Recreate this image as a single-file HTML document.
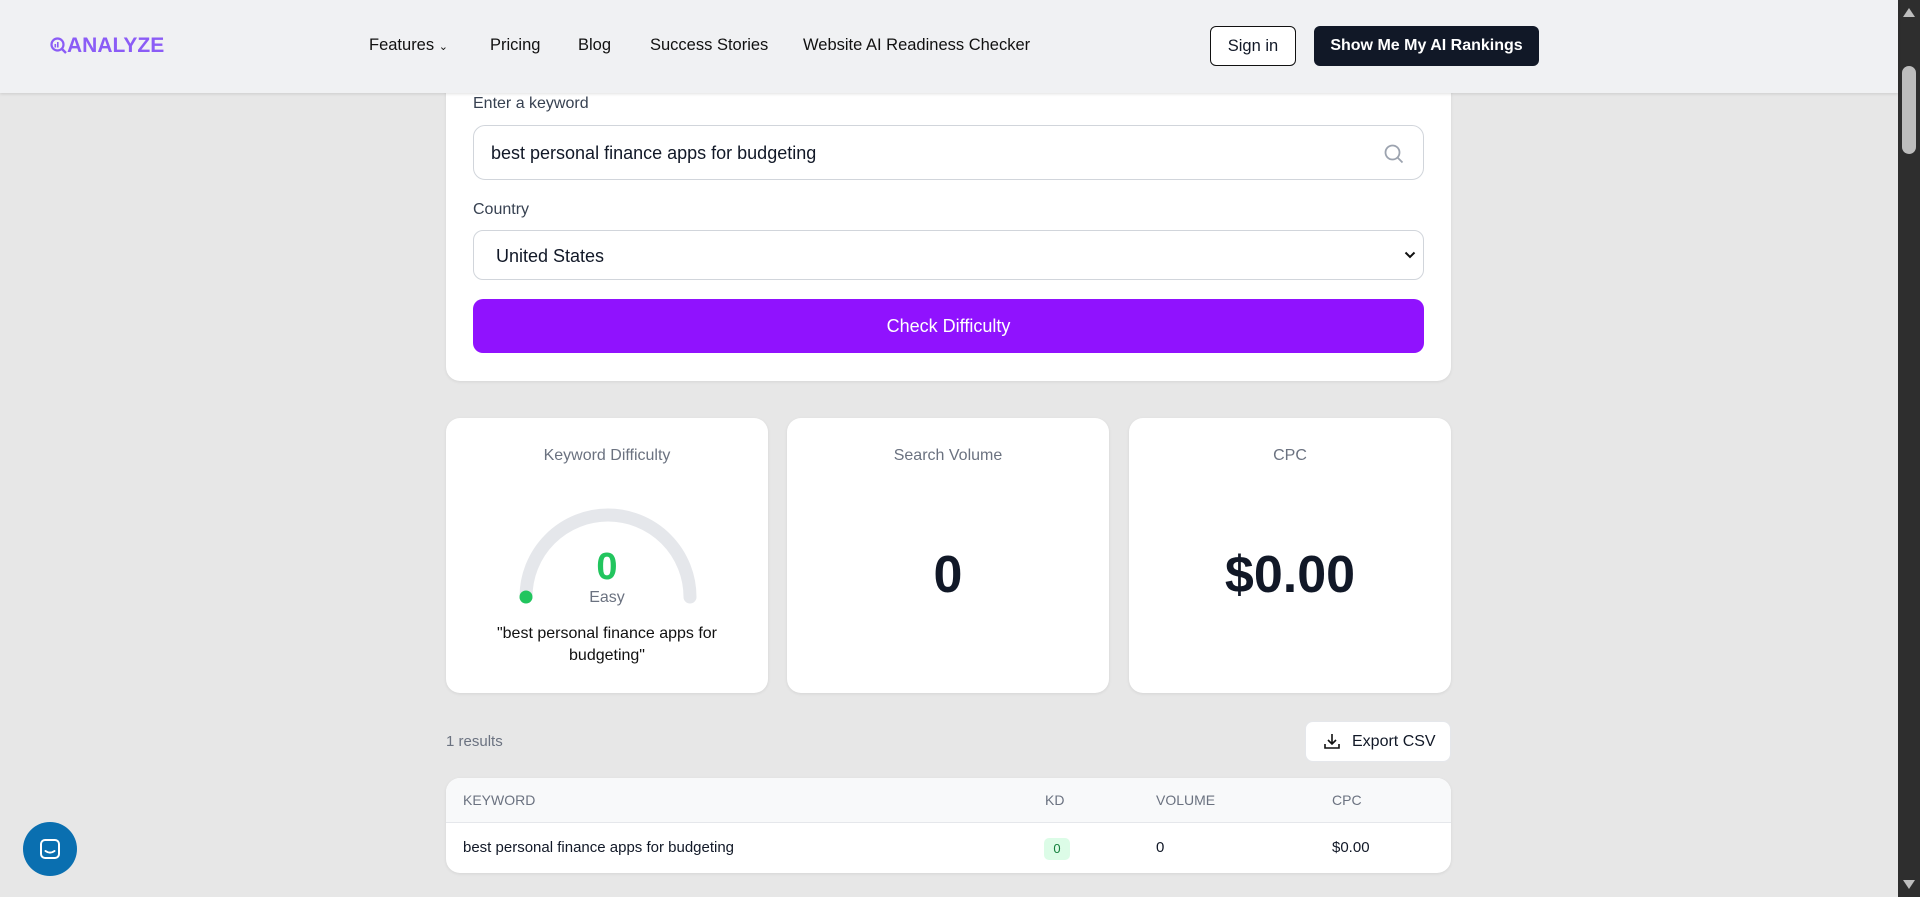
<!DOCTYPE html>
<html><head><meta charset="utf-8"><style>
*{box-sizing:border-box;margin:0;padding:0}
body{width:1920px;height:897px;overflow:hidden;background:#e7e7e7;font-family:"Liberation Sans",sans-serif;color:#111827;position:relative}
.abs{position:absolute}
.nav{left:0;top:0;width:1898px;height:93px;background:#f0f1f3;box-shadow:0 1px 3px rgba(0,0,0,.12);z-index:5}
.nav a{position:absolute;top:36px;font-size:16.5px;color:#111;}
.card{background:#fff;border-radius:14px;box-shadow:0 1px 3px rgba(0,0,0,.08)}
.lbl{font-size:16px;color:#374151}
.inp{border:1px solid #d1d5db;border-radius:10px;background:#fff}
.ctitle{position:absolute;top:447px;width:100%;text-align:center;font-size:16px;color:#6b7280}
.big{position:absolute;top:545px;width:100%;text-align:center;font-size:52px;font-weight:bold;color:#111827}
.th{position:absolute;top:792px;font-size:14px;color:#6b7280}
.td{position:absolute;top:839px;font-size:15px;color:#111827}
</style></head><body>
<div class="abs nav">
  <div class="abs" style="left:50px;top:34px;font-size:21px;font-weight:bold;color:#8b5cf6">
    <svg width="17" height="17" viewBox="0 0 17 17" style="vertical-align:-2px"><circle cx="7.5" cy="7.5" r="6" fill="none" stroke="#8b5cf6" stroke-width="2.2"/><path d="M12 12l4 4" stroke="#8b5cf6" stroke-width="2.4"/><rect x="4.5" y="7" width="1.6" height="3.5" fill="#8b5cf6"/><rect x="7" y="5" width="1.6" height="5.5" fill="#8b5cf6"/></svg>ANALYZE</div>
  <a style="left:369px">Features <span style="font-size:11px">&#8964;</span></a>
  <a style="left:490px">Pricing</a>
  <a style="left:578px">Blog</a>
  <a style="left:650px">Success Stories</a>
  <a style="left:803px">Website AI Readiness Checker</a>
  <div class="abs" style="left:1210px;top:26px;width:86px;height:40px;border:1px solid #111;border-radius:6px;background:#fff;font-size:16.5px;text-align:center;line-height:38px">Sign in</div>
  <div class="abs" style="left:1314px;top:26px;width:225px;height:40px;border-radius:6px;background:#111827;color:#fff;font-weight:bold;font-size:16px;text-align:center;line-height:40px">Show Me My AI Rankings</div>
</div>
<div class="abs" style="left:1898px;top:0;width:22px;height:897px;background:#2e2e2e"></div>
<div class="abs" style="left:1902px;top:66px;width:14px;height:88px;background:#bdbdbd;border-radius:7px"></div>
<div class="abs" style="left:1903px;top:8px;width:0;height:0;border-left:6px solid transparent;border-right:6px solid transparent;border-bottom:9px solid #bdbdbd"></div>
<div class="abs" style="left:1903px;top:880px;width:0;height:0;border-left:6px solid transparent;border-right:6px solid transparent;border-top:9px solid #bdbdbd"></div>

<div class="abs card" style="left:446px;top:60px;width:1005px;height:321px"></div>
<div class="abs lbl" style="left:473px;top:95px">Enter a keyword</div>
<div class="abs inp" style="left:473px;top:125px;width:951px;height:55px;border-radius:12px"></div>
<div class="abs" style="left:491px;top:143px;font-size:18px">best personal finance apps for budgeting</div>
<svg class="abs" style="left:1383px;top:143px" width="22" height="22" viewBox="0 0 22 22"><circle cx="9.5" cy="9.5" r="7" fill="none" stroke="#9ca3af" stroke-width="1.8"/><path d="M14.5 14.5l5 5" stroke="#9ca3af" stroke-width="1.8"/></svg>
<div class="abs lbl" style="left:473px;top:201px">Country</div>
<div class="abs inp" style="left:473px;top:230px;width:951px;height:50px"></div>
<div class="abs" style="left:496px;top:246px;font-size:18px">United States</div>
<svg class="abs" style="left:1404px;top:250px" width="12" height="10" viewBox="0 0 12 10"><path d="M1.5 2.5l4.5 4.5 4.5-4.5" fill="none" stroke="#111" stroke-width="2"/></svg>
<div class="abs" style="left:473px;top:299px;width:951px;height:54px;background:#9012fe;border-radius:10px;color:#fff;font-size:18px;text-align:center;line-height:54px">Check Difficulty</div>

<div class="abs card" style="left:446px;top:418px;width:322px;height:275px"></div>
<div class="abs card" style="left:787px;top:418px;width:322px;height:275px"></div>
<div class="abs card" style="left:1129px;top:418px;width:322px;height:275px"></div>
<div class="abs" style="left:446px;top:0;width:322px;height:897px"><div class="ctitle">Keyword Difficulty</div>
<svg class="abs" style="left:64px;top:494px" width="196" height="112" viewBox="0 0 196 112"><path d="M16 103 A82 82 0 0 1 180 103" fill="none" stroke="#e5e7eb" stroke-width="13" stroke-linecap="round"/><circle cx="16" cy="103" r="6.5" fill="#22c55e"/></svg>
<div class="abs" style="top:546px;width:100%;text-align:center;font-size:38px;font-weight:bold;color:#22c55e">0</div>
<div class="abs" style="top:589px;width:100%;text-align:center;font-size:16px;color:#6b7280">Easy</div>
<div class="abs" style="top:623px;width:100%;text-align:center;font-size:16px;line-height:22px;color:#111">"best personal finance apps for<br>budgeting"</div>
</div>
<div class="abs" style="left:787px;top:0;width:322px;height:897px"><div class="ctitle">Search Volume</div><div class="big">0</div></div>
<div class="abs" style="left:1129px;top:0;width:322px;height:897px"><div class="ctitle">CPC</div><div class="big">$0.00</div></div>

<div class="abs" style="left:446px;top:733px;font-size:15px;color:#6b7280">1 results</div>
<div class="abs" style="left:1305px;top:721px;width:146px;height:41px;background:#fff;border:1px solid #e5e7eb;border-radius:8px;font-size:16px;line-height:39px;padding-left:46px">Export CSV</div>
<svg class="abs" style="left:1323px;top:732px" width="18" height="18" viewBox="0 0 18 18"><path d="M9 2v10M5 8l4 4 4-4M2 12v4h14v-4" fill="none" stroke="#111" stroke-width="1.6"/></svg>

<div class="abs card" style="left:446px;top:778px;width:1005px;height:95px;overflow:hidden">
  <div style="height:45px;background:#f8f9fa;border-bottom:1px solid #e5e7eb"></div>
</div>
<div class="th" style="left:463px">KEYWORD</div>
<div class="th" style="left:1045px">KD</div>
<div class="th" style="left:1156px">VOLUME</div>
<div class="th" style="left:1332px">CPC</div>
<div class="td" style="left:463px">best personal finance apps for budgeting</div>
<div class="abs" style="left:1044px;top:838px;width:26px;height:22px;background:#dcfce7;border-radius:5px;color:#15803d;font-size:13px;text-align:center;line-height:22px">0</div>
<div class="td" style="left:1156px">0</div>
<div class="td" style="left:1332px">$0.00</div>

<div class="abs" style="left:23px;top:822px;width:54px;height:54px;border-radius:50%;background:#0a6fb0"></div>
<svg class="abs" style="left:38px;top:837px" width="24" height="24" viewBox="0 0 24 24"><rect x="3" y="3" width="18" height="18" rx="4" fill="none" stroke="#fff" stroke-width="2"/><path d="M7.5 14c3 2.2 6 2.2 9 0" fill="none" stroke="#fff" stroke-width="2" stroke-linecap="round"/></svg>
</body></html>
